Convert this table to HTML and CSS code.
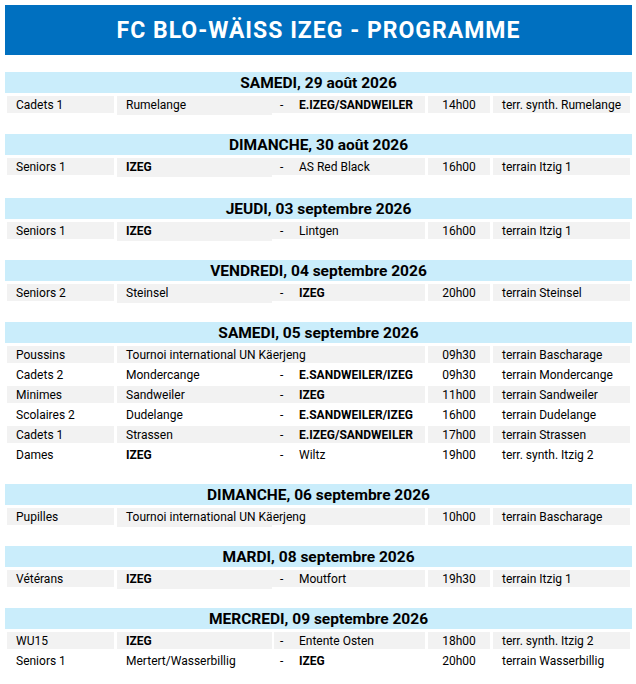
FILE: index.html
```html
<!DOCTYPE html>
<html lang="fr">
<head>
<meta charset="utf-8">
<title>FC BLO-WÄISS IZEG - PROGRAMME</title>
<link rel="stylesheet" href="styles.css">
</head>
<body>
<div class="sheet">
  <div class="title">FC BLO-WÄISS IZEG - PROGRAMME</div>

  <section class="day">
    <div class="day-head">SAMEDI, 29 août 2026</div>
    <div class="row shade single">
      <div class="c cat">Cadets 1</div>
      <div class="c home">Rumelange</div>
      <div class="c away"><span class="dash">-</span><b>E.IZEG/SANDWEILER</b></div>
      <div class="c time">14h00</div>
      <div class="c venue">terr. synth. Rumelange</div>
    </div>
  </section>

  <section class="day day-spaced">
    <div class="day-head">DIMANCHE, 30 août 2026</div>
    <div class="row shade single">
      <div class="c cat">Seniors 1</div>
      <div class="c home"><b>IZEG</b></div>
      <div class="c away"><span class="dash">-</span>AS Red Black</div>
      <div class="c time">16h00</div>
      <div class="c venue">terrain Itzig 1</div>
    </div>
  </section>

  <section class="day">
    <div class="day-head">JEUDI, 03 septembre 2026</div>
    <div class="row shade single">
      <div class="c cat">Seniors 1</div>
      <div class="c home"><b>IZEG</b></div>
      <div class="c away"><span class="dash">-</span>Lintgen</div>
      <div class="c time">16h00</div>
      <div class="c venue">terrain Itzig 1</div>
    </div>
  </section>

  <section class="day">
    <div class="day-head">VENDREDI, 04 septembre 2026</div>
    <div class="row shade single">
      <div class="c cat">Seniors 2</div>
      <div class="c home">Steinsel</div>
      <div class="c away"><span class="dash">-</span><b>IZEG</b></div>
      <div class="c time">20h00</div>
      <div class="c venue">terrain Steinsel</div>
    </div>
  </section>

  <section class="day">
    <div class="day-head">SAMEDI, 05 septembre 2026</div>
    <div class="row shade">
      <div class="c cat">Poussins</div>
      <div class="c wide">Tournoi international UN Käerjeng</div>
      <div class="c time">09h30</div>
      <div class="c venue">terrain Bascharage</div>
    </div>
    <div class="row">
      <div class="c cat">Cadets 2</div>
      <div class="c home">Mondercange</div>
      <div class="c away"><span class="dash">-</span><b>E.SANDWEILER/IZEG</b></div>
      <div class="c time">09h30</div>
      <div class="c venue">terrain Mondercange</div>
    </div>
    <div class="row shade">
      <div class="c cat">Minimes</div>
      <div class="c home">Sandweiler</div>
      <div class="c away"><span class="dash">-</span><b>IZEG</b></div>
      <div class="c time">11h00</div>
      <div class="c venue">terrain Sandweiler</div>
    </div>
    <div class="row">
      <div class="c cat">Scolaires 2</div>
      <div class="c home">Dudelange</div>
      <div class="c away"><span class="dash">-</span><b>E.SANDWEILER/IZEG</b></div>
      <div class="c time">16h00</div>
      <div class="c venue">terrain Dudelange</div>
    </div>
    <div class="row shade">
      <div class="c cat">Cadets 1</div>
      <div class="c home">Strassen</div>
      <div class="c away"><span class="dash">-</span><b>E.IZEG/SANDWEILER</b></div>
      <div class="c time">17h00</div>
      <div class="c venue">terrain Strassen</div>
    </div>
    <div class="row">
      <div class="c cat">Dames</div>
      <div class="c home"><b>IZEG</b></div>
      <div class="c away"><span class="dash">-</span>Wiltz</div>
      <div class="c time">19h00</div>
      <div class="c venue">terr. synth. Itzig 2</div>
    </div>
  </section>

  <section class="day">
    <div class="day-head">DIMANCHE, 06 septembre 2026</div>
    <div class="row shade single">
      <div class="c cat">Pupilles</div>
      <div class="c home"><span class="overflow">Tournoi international UN Käerjeng</span></div>
      <div class="c away"></div>
      <div class="c time">10h00</div>
      <div class="c venue">terrain Bascharage</div>
    </div>
  </section>

  <section class="day">
    <div class="day-head">MARDI, 08 septembre 2026</div>
    <div class="row shade single">
      <div class="c cat">Vétérans</div>
      <div class="c home"><b>IZEG</b></div>
      <div class="c away"><span class="dash">-</span>Moutfort</div>
      <div class="c time">19h30</div>
      <div class="c venue">terrain Itzig 1</div>
    </div>
  </section>

  <section class="day">
    <div class="day-head">MERCREDI, 09 septembre 2026</div>
    <div class="row shade split">
      <div class="c cat">WU15</div>
      <div class="c home"><b>IZEG</b></div>
      <div class="c away"><span class="dash">-</span>Entente Osten</div>
      <div class="c time">18h00</div>
      <div class="c venue">terr. synth. Itzig 2</div>
    </div>
    <div class="row">
      <div class="c cat">Seniors 1</div>
      <div class="c home">Mertert/Wasserbillig</div>
      <div class="c away"><span class="dash">-</span><b>IZEG</b></div>
      <div class="c time">20h00</div>
      <div class="c venue">terrain Wasserbillig</div>
    </div>
  </section>
</div>
</body>
</html>
```

FILE: styles.css
```css
html, body {
  margin: 0;
  padding: 0;
  background: #ffffff;
}

body {
  font-family: Roboto, "Liberation Sans", Arial, sans-serif;
  font-size: 12px;
  color: #000000;
}

.sheet {
  width: 627px;
  padding: 5px 4px 0 5px;
}

.title {
  height: 50px;
  background: #0070c0;
  color: #ffffff;
  font-weight: 700;
  font-size: 23px;
  letter-spacing: 1px;
  display: flex;
  align-items: center;
  justify-content: center;
  margin-bottom: 17px;
}

.day {
  margin-bottom: 18px;
}

.day-spaced {
  margin-bottom: 20px;
}

.day-head {
  height: 21px;
  background: #caedfb;
  font-weight: 700;
  font-size: 15.5px;
  display: flex;
  align-items: center;
  justify-content: center;
  margin-bottom: 3px;
}

.row {
  height: 20px;
  display: flex;
  align-items: flex-start;
  padding: 0 2px;
}

.c {
  height: 17px;
  display: flex;
  align-items: center;
  white-space: nowrap;
  box-sizing: border-box;
}

.shade .c {
  background: #f2f2f2;
}

.cat {
  width: 107px;
  margin-right: 3px;
  padding-left: 9px;
}

.home {
  width: 155px;
  padding-left: 9px;
}

.wide {
  width: 308px;
  padding-left: 9px;
  margin-right: 3px;
}

.single .home {
  height: 19px;
  padding-bottom: 2px;
}

.split .home {
  margin-right: 2px;
}

.split .away {
  width: 151px;
  padding-left: 6px;
}

.overflow {
  position: relative;
  z-index: 1;
}

.away {
  width: 153px;
  margin-right: 3px;
  padding-left: 8px;
}

.dash {
  display: inline-block;
  width: 19px;
}

.time {
  width: 62px;
  margin-right: 3px;
  justify-content: center;
}

.venue {
  width: 137px;
  padding-left: 9px;
}

b {
  font-weight: 700;
}
```
